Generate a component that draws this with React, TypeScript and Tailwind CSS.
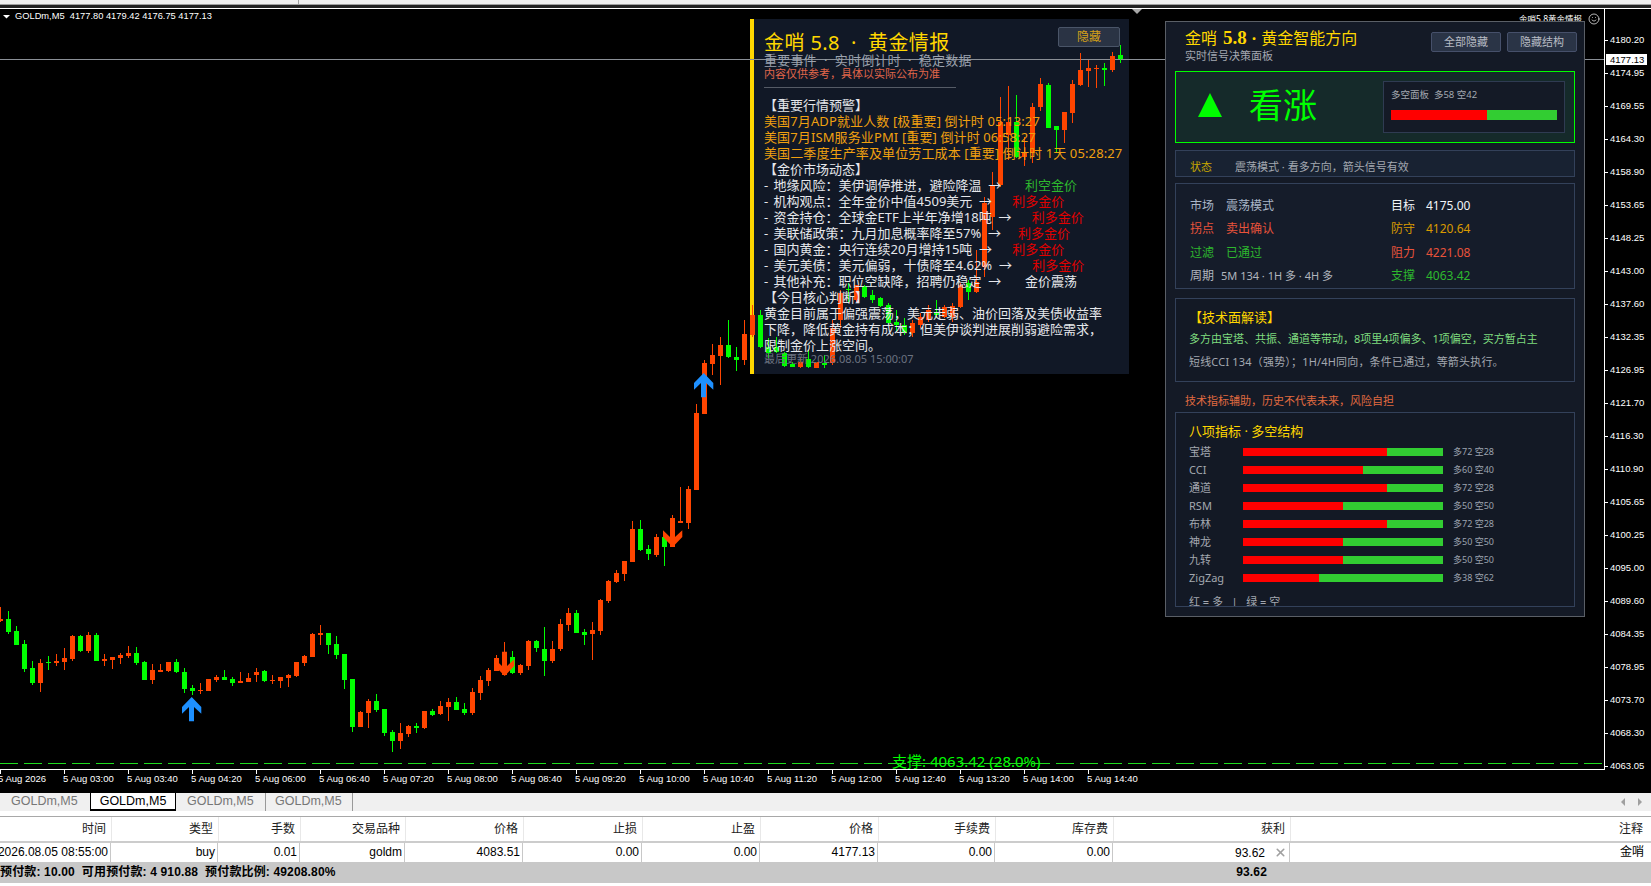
import React from "react";
import { Smile, X } from "lucide-react";

// [orange?, high, bodyTop, bodyBottom, low], read off the reference at 3x
type Candle = [number, number, number, number, number];

const SEGMENTS: { y0: number; rows: Candle[] }[] = [
  {
    y0: 590,
    rows: [
      [1, 50, 87, 93, 96], [0, 63, 87, 126, 131], [0, 108, 123, 165, 165], [0, 150, 162, 237, 246],
      [0, 213, 234, 279, 285], [1, 207, 219, 279, 306], [0, 198, 216, 219, 240], [1, 192, 213, 219, 228],
      [1, 174, 204, 216, 240], [1, 135, 138, 207, 213], [0, 135, 138, 183, 186], [1, 126, 135, 183, 189],
      [0, 129, 135, 213, 213], [1, 192, 207, 213, 228], [1, 201, 201, 210, 237], [1, 189, 195, 204, 222],
      [1, 168, 189, 198, 204], [0, 171, 189, 219, 225], [0, 213, 216, 270, 270], [1, 222, 240, 270, 282],
      [1, 222, 240, 246, 246], [1, 216, 216, 243, 246], [0, 207, 216, 246, 249], [0, 234, 246, 297, 309],
      [0, 285, 294, 303, 315], [1, 279, 300, 303, 312], [1, 267, 267, 303, 303], [1, 255, 261, 270, 276],
      [0, 240, 261, 270, 270], [0, 261, 267, 279, 288], [1, 246, 273, 279, 279], [1, 249, 264, 276, 276],
      [1, 234, 246, 255, 276], [0, 240, 243, 273, 276], [1, 255, 270, 273, 282], [1, 261, 261, 273, 294],
      [1, 252, 255, 264, 291], [1, 216, 216, 258, 261], [1, 195, 198, 219, 228], [1, 129, 132, 201, 201],
      [1, 105, 129, 135, 165], [0, 129, 129, 165, 192], [0, 138, 162, 195, 207], [0, 192, 192, 270, 297],
      [0, 267, 267, 411, 426], [1, 363, 366, 411, 411], [1, 327, 333, 369, 414], [0, 312, 333, 360, 366],
      [0, 357, 357, 429, 438], [0, 420, 426, 453, 486], [1, 399, 429, 453, 477], [1, 405, 408, 432, 441],
      [0, 399, 408, 414, 429], [1, 363, 363, 414, 417], [0, 357, 363, 375, 378], [1, 333, 348, 372, 375],
      [1, 324, 336, 351, 393], [0, 321, 336, 360, 360], [0, 339, 357, 369, 375], [1, 294, 306, 369, 375],
      [1, 258, 270, 309, 330], [1, 234, 240, 273, 288], [1, 195, 204, 243, 243],
    ],
  },
  {
    y0: 560,
    rows: [
      [1, 246, 279, 345, 345], [0, 273, 291, 339, 342], [1, 312, 315, 339, 345], [1, 240, 243, 318, 330],
      [0, 240, 243, 264, 276], [0, 201, 267, 303, 348], [1, 243, 267, 303, 309], [1, 177, 192, 267, 273],
      [1, 144, 159, 195, 213], [0, 150, 159, 219, 219], [0, 207, 216, 225, 255], [1, 186, 210, 222, 300],
      [1, 117, 120, 213, 225], [1, 60, 63, 123, 129], [1, 30, 39, 66, 69],
    ],
  },
  {
    y0: 330,
    rows: [
      [1, 693, 693, 732, 753], [1, 573, 597, 696, 696], [0, 570, 597, 660, 663], [0, 645, 657, 672, 690],
      [1, 612, 621, 675, 681], [0, 612, 621, 651, 708], [1, 555, 564, 651, 651], [1, 471, 573, 579, 579],
      [1, 468, 477, 579, 597], [1, 222, 249, 480, 480], [1, 90, 99, 252, 252], [1, 42, 75, 102, 135],
      [1, 21, 45, 78, 165], [0, -30, 45, 81, 84], [0, 51, 81, 90, 123],
    ],
  },
  {
    y0: 0,
    rows: [
      [1, 960, 1002, 1080, 1095], [1, 915, 945, 1005, 1012], [0, 930, 945, 1040, 1045], [0, 1015, 1040, 1058, 1075],
      [0, 1010, 1040, 1055, 1060], [0, 1055, 1058, 1098, 1100], [0, 1085, 1092, 1100, 1100], [1, 1075, 1085, 1100, 1105],
      [0, 1050, 1078, 1100, 1105], [1, 1085, 1087, 1103, 1103], [0, 1065, 1090, 1095, 1105], [1, 960, 985, 1090, 1095],
      [1, 870, 880, 960, 985], [0, 850, 868, 870, 905], [1, 855, 855, 900, 905], [0, 855, 858, 890, 895],
      [0, 870, 885, 900, 910], [0, 890, 895, 918, 920], [0, 910, 915, 970, 975], [0, 930, 965, 975, 995],
      [0, 955, 975, 1000, 1005], [1, 960, 968, 1000, 1010], [1, 940, 950, 975, 985], [1, 915, 930, 960, 965],
      [0, 900, 935, 945, 955], [1, 915, 920, 950, 955], [1, 910, 918, 950, 965], [1, 850, 855, 920, 925],
      [0, 840, 848, 875, 900], [1, 750, 845, 875, 880], [1, 590, 610, 800, 830], [1, 515, 555, 650, 690],
      [1, 290, 365, 555, 560], [1, 258, 365, 405, 480], [0, 285, 365, 470, 475], [1, 410, 460, 470, 497],
      [1, 310, 320, 460, 490], [1, 235, 252, 320, 332], [0, 250, 255, 383, 385], [0, 378, 378, 390, 460],
      [1, 335, 335, 390, 430], [1, 240, 252, 338, 368], [1, 160, 210, 255, 257], [1, 180, 205, 212, 260],
      [1, 195, 205, 207, 265], [0, 190, 205, 210, 258], [1, 155, 168, 210, 215], [0, 135, 165, 178, 188],
    ],
  },
];

const CANDLES = SEGMENTS.flatMap((seg) =>
  seg.rows.map(([up, hi, top, bot, lo]) => ({
    up: up === 1,
    hi: Math.round(seg.y0 + hi / 3),
    top: Math.round(seg.y0 + top / 3),
    bot: Math.round(seg.y0 + bot / 3),
    lo: Math.round(seg.y0 + lo / 3),
  }))
);

const AXIS = [
  "4180.20", "4174.95", "4169.55", "4164.30", "4158.90", "4153.65", "4148.25", "4143.00",
  "4137.60", "4132.35", "4126.95", "4121.70", "4116.30", "4110.90", "4105.65", "4100.25",
  "4095.00", "4089.60", "4084.35", "4078.95", "4073.70", "4068.30", "4063.05",
];

const TIMES = [
  "5 Aug 2026", "5 Aug 03:00", "5 Aug 03:40", "5 Aug 04:20", "5 Aug 06:00", "5 Aug 06:40",
  "5 Aug 07:20", "5 Aug 08:00", "5 Aug 08:40", "5 Aug 09:20", "5 Aug 10:00", "5 Aug 10:40",
  "5 Aug 11:20", "5 Aug 12:00", "5 Aug 12:40", "5 Aug 13:20", "5 Aug 14:00", "5 Aug 14:40",
];

const NEWS = [
  { text: " 地缘风险：美伊调停推进，避险降温  →       ", tag: "利空金价", cls: "text-[#2eb82e]" },
  { text: " 机构观点：全年金价中值4509美元  →      ", tag: "利多金价", cls: "text-[#e00000]" },
  { text: " 资金持仓：全球金ETF上半年净增18吨  →      ", tag: "利多金价", cls: "text-[#e00000]" },
  { text: " 美联储政策：九月加息概率降至57%  →     ", tag: "利多金价", cls: "text-[#e00000]" },
  { text: " 国内黄金：央行连续20月增持15吨  →      ", tag: "利多金价", cls: "text-[#e00000]" },
  { text: " 美元美债：美元偏弱，十债降至4.62%  →      ", tag: "利多金价", cls: "text-[#e00000]" },
  { text: " 其他补充：职位空缺降，招聘仍稳定  →       ", tag: "金价震荡", cls: "text-[#e5e7eb]" },
];

const INDICATORS = [
  { name: "宝塔", bull: 72, bear: 28 },
  { name: "CCI", bull: 60, bear: 40 },
  { name: "通道", bull: 72, bear: 28 },
  { name: "RSM", bull: 50, bear: 50 },
  { name: "布林", bull: 72, bear: 28 },
  { name: "神龙", bull: 50, bear: 50 },
  { name: "九转", bull: 50, bear: 50 },
  { name: "ZigZag", bull: 38, bear: 62 },
];

const COLS = [
  { w: "w-[112px]", rw: "w-[111px]", head: "时间", val: "2026.08.05 08:55:00" },
  { w: "w-[107px]", rw: "w-[107px]", head: "类型", val: "buy" },
  { w: "w-[82px]", rw: "w-[82px]", head: "手数", val: "0.01" },
  { w: "w-[105px]", rw: "w-[105px]", head: "交易品种", val: "goldm" },
  { w: "w-[118px]", rw: "w-[118px]", head: "价格", val: "4083.51" },
  { w: "w-[119px]", rw: "w-[119px]", head: "止损", val: "0.00" },
  { w: "w-[118px]", rw: "w-[118px]", head: "止盈", val: "0.00" },
  { w: "w-[118px]", rw: "w-[118px]", head: "价格", val: "4177.13" },
  { w: "w-[117px]", rw: "w-[117px]", head: "手续费", val: "0.00" },
  { w: "w-[118px]", rw: "w-[118px]", head: "库存费", val: "0.00" },
];

const Arrow = ({ x, y, color, flip }: { x: number; y: number; color: string; flip?: boolean }) => (
  <polygon
    transform={flip ? `translate(${x} ${y + 24}) scale(1 -1)` : `translate(${x} ${y})`}
    points="9.7,0 19.3,10 19.3,16.7 12,10 12,24.3 7,24.3 7,10 0,16.7 0,10"
    fill={color}
  />
);

const Chart = () => (
  <svg className="absolute left-0 top-0 z-10" width={1604} height={760} viewBox="0 9 1604 760" shapeRendering="crispEdges">
    <line x1={0} x2={1604} y1={59.5} y2={59.5} stroke="#8a8f96" />
    <line x1={0} x2={1604} y1={763.5} y2={763.5} stroke="#1fdc1f" strokeDasharray="18 6" />
    {CANDLES.map((c, i) => (
      <g key={i} fill={c.up ? "#ff4500" : "#00ff00"}>
        <rect x={8 * i} y={c.hi} width={1} height={Math.max(c.lo - c.hi, 1)} />
        <rect x={8 * i - 2} y={c.top} width={5} height={Math.max(c.bot - c.top, 1)} />
      </g>
    ))}
    <g shapeRendering="auto">
      <Arrow x={182} y={697} color="#1e90ff" />
      <Arrow x={694} y={373} color="#1e90ff" />
      <Arrow x={495} y={652} color="#ff4500" flip />
      <Arrow x={663} y={523} color="#ff4500" flip />
      <polygon points="3,15 10,15 6.5,18.5" fill="#ffffff" />
      <polygon points="1132,9 1142,9 1137,14" fill="#a8a8a8" />
    </g>
  </svg>
);

const LeftPanelText = () => (
  <div className="absolute left-[754px] top-[10px] z-20 w-[375px] pl-[10px] pt-[13px] text-[13px] leading-[16px] text-[#e5e7eb]">
    <button className="absolute right-[9px] top-[8px] flex h-[20px] w-[62px] items-center justify-center rounded-[2px] border border-[#4a5568] bg-[#2a3344] text-[12px] text-[#d4a017]">
      隐藏
    </button>
    <div className="text-[20px] leading-[21px] tracking-[0.4px] text-[#ffd700] whitespace-pre">金哨 5.8  ·  黄金情报</div>
    <div className="text-[13px] leading-[14px] tracking-[0.2px] text-[#9ca3af] whitespace-pre">重要事件  ·  实时倒计时  ·  稳定数据</div>
    <div className="text-[11px] leading-[14px] text-[#e0664a]">内容仅供参考，具体以实际公布为准</div>
    <div className="mb-[9px] mt-[6px] h-px w-[192px] bg-[#555b66]" />
    <div>【重要行情预警】</div>
    <div className="tracking-[0.12px] text-[#f0a010] whitespace-pre">美国7月ADP就业人数 [极重要] 倒计时 05:13:27</div>
    <div className="tracking-[0.12px] text-[#f0a010] whitespace-pre">美国7月ISM服务业PMI [重要] 倒计时 06:58:27</div>
    <div className="tracking-[0.12px] text-[#f0a010] whitespace-pre">美国二季度生产率及单位劳工成本 [重要] 倒计时 1天 05:28:27</div>
    <div>【金价市场动态】</div>
    {NEWS.map((n) => (
      <div key={n.text} className="whitespace-pre">
        <span className="mr-[2px]">-</span>
        {n.text}
        <span className={n.cls}>{n.tag}</span>
      </div>
    ))}
    <div>【今日核心判断】</div>
    <div className="whitespace-pre">黄金目前属于偏强震荡，美元走弱、油价回落及美债收益率</div>
    <div className="whitespace-pre">下降，降低黄金持有成本；但美伊谈判进展削弱避险需求，</div>
    <div>限制金价上涨空间。</div>
    <div className="-mt-[2px] text-[11px] text-[#6b7280]">最后更新 2026.08.05 15:00:07</div>
  </div>
);

const InfoCell = ({ label, value, cls, w, small }: { label: string; value: string; cls: string; w: string; small?: boolean }) => (
  <div className={`flex h-[23px] items-center ${cls}`}>
    <span className={`${w} text-[12px]`}>{label}</span>
    <span className={small ? "text-[11px]" : "text-[12px]"}>{value}</span>
  </div>
);

const RightPanel = () => (
  <div className="absolute left-[1165px] top-[12px] z-30 h-[596px] w-[420px] border border-[#5a5f66] bg-[#141a26] px-[9px]">
    <div className="flex h-[49px] justify-between pl-[10px]">
      <div className="pt-[5px]">
        <div className="flex items-baseline text-[16px] leading-[22px] text-[#ffd700]">
          <span>金哨</span>
          <span className="ml-[6px] font-['Liberation_Serif',serif] text-[19px] font-bold">5.8</span>
          <b className="mx-[5px] font-bold">·</b>
          <span>黄金智能方向</span>
        </div>
        <div className="text-[11px] leading-[14px] text-[#a3a8b0]">实时信号决策面板</div>
      </div>
      <div className="-mr-[2px] flex gap-[6px] pt-[10px]">
        <button className="h-[20px] w-[70px] rounded-[2px] border border-[#46506a] bg-[#2a3446] text-[11px] leading-[18px] text-[#b8bcc4]">全部隐藏</button>
        <button className="h-[20px] w-[70px] rounded-[2px] border border-[#46506a] bg-[#2a3446] text-[11px] leading-[18px] text-[#b8bcc4]">隐藏结构</button>
      </div>
    </div>

    <div className="flex h-[72px] items-center border border-[#00ff00] bg-[#152a2a] pl-[22px] pr-[9px]">
      <svg width={24} height={24} viewBox="0 0 24 24" className="mb-[4px] shrink-0">
        <polygon points="12,0 24,24 0,24" fill="#00ff00" />
      </svg>
      <span className="mb-[4px] ml-[27px] text-[34px] leading-[40px] text-[#00ff00]">看涨</span>
      <div className="ml-auto h-[52px] w-[182px] border border-[#2f3b52] bg-[#141a26] px-[7px] pt-[6px]">
        <div className="text-[9.5px] leading-[14px] text-[#a3a8b0] whitespace-pre">多空面板  多58 空42</div>
        <div className="mt-[8px] flex h-[10px] w-[166px]">
          <div className="w-[58%] bg-[#ff0000]" />
          <div className="flex-1 bg-[#32cd32]" />
        </div>
      </div>
    </div>

    <div className="mt-[7px] flex h-[27px] items-center border border-[#33415a] bg-[#182232] pl-[14px] pt-[8px] text-[11px]">
      <span className="w-[45px] text-[#c8a800]">状态</span>
      <span className="text-[#a3a8b0]">震荡模式 · 看多方向，箭头信号有效</span>
    </div>

    <div className="mt-[6px] grid h-[106px] grid-cols-[201px_1fr] border border-[#33415a] bg-[#151c2a] pl-[14px] pt-[10px]">
      <InfoCell label="市场" value="震荡模式" cls="text-[#a9b6c8]" w="w-[36px]" />
      <InfoCell label="目标" value="4175.00" cls="text-[#f1f5f9]" w="w-[35px]" />
      <InfoCell label="拐点" value="卖出确认" cls="text-[#e8533a]" w="w-[36px]" />
      <InfoCell label="防守" value="4120.64" cls="text-[#d99a00]" w="w-[35px]" />
      <InfoCell label="过滤" value="已通过" cls="text-[#2eb82e]" w="w-[36px]" />
      <InfoCell label="阻力" value="4221.08" cls="text-[#e8533a]" w="w-[35px]" />
      <InfoCell label="周期" value="5M 134 · 1H 多 · 4H 多" cls="text-[#b0b5bd]" w="w-[31px]" small />
      <InfoCell label="支撑" value="4063.42" cls="text-[#2eb82e]" w="w-[35px]" />
    </div>

    <div className="mt-[9px] h-[84px] border border-[#33415a] bg-[#131925] pl-[13px] pt-[9px] text-[11px] leading-[23px]">
      <div className="mb-px text-[13px] leading-[18px] text-[#ffd700]">【技术面解读】</div>
      <div className="text-[#7fdc7f] whitespace-pre">多方由宝塔、共振、通道等带动，8项里4项偏多、1项偏空，买方暂占主</div>
      <div className="tracking-[0.18px] text-[#a3a8b0] whitespace-pre">短线CCI 134（强势）；1H/4H同向，条件已通过，等箭头执行。</div>
    </div>

    <div className="mb-[3px] mt-[11px] pl-[10px] text-[11px] leading-[16px] text-[#e06a40]">技术指标辅助，历史不代表未来，风险自担</div>

    <div className="h-[195px] overflow-hidden border border-[#33415a] bg-[#131925] pl-[13px] pt-[9px]">
      <div className="mb-[3px] text-[13px] leading-[18px] text-[#ffd700]">八项指标 · 多空结构</div>
      {INDICATORS.map((row) => (
        <div key={row.name} className="flex h-[18px] items-center text-[11px] text-[#a3a8b0]">
          <span className="w-[54px]">{row.name}</span>
          <div className="flex h-[8px] w-[200px]">
            <div className="bg-[#ff0000]" style={{ width: `${row.bull}%` }} />
            <div className="flex-1 bg-[#32cd32]" />
          </div>
          <span className="ml-[10px] text-[9px] text-[#9ca3af]">{`多${row.bull} 空${row.bear}`}</span>
        </div>
      ))}
      <div className="mt-[7px] text-[11px] leading-[16px] text-[#a3a8b0] whitespace-pre">红 = 多   |   绿 = 空</div>
    </div>
  </div>
);

const PriceAxis = () => (
  <div className="relative w-[46px] shrink-0 pt-[15px] font-['Liberation_Sans',sans-serif] text-[9.5px] text-white">
    {AXIS.map((p) => (
      <div key={p} className="flex h-[33px] items-center">
        <div className="h-px w-[3px] bg-white" />
        <span className="ml-[2px]">{p}</span>
      </div>
    ))}
    <div className="absolute left-px top-[45px] h-[11px] w-[41px] bg-white pl-[4px] text-[9.5px] leading-[11px] text-black">4177.13</div>
  </div>
);

export default function App() {
  return (
    <div className="flex h-[886px] w-[1651px] flex-col overflow-hidden bg-white font-['Noto_Sans','Noto_Sans_CJK_SC',sans-serif]">
      {/* terminal toolbar edge */}
      <div className="h-[4px] bg-[#f0f0f0]">
        <div className="ml-[298px] h-full w-px bg-[#a0a0a0]" />
      </div>
      <div className="h-px bg-[#a0a0a0]" />
      <div className="h-[3px] bg-[#222222]" />

      <div className="flex h-[762px] border-t border-white bg-black">
        <div className="relative w-[1605px] shrink-0 border-b border-r border-white">
          <div className="absolute left-[750px] top-[10px] h-[355px] w-[379px] border-l-4 border-[#ffd700] bg-[#111826]" />
          <Chart />
          <LeftPanelText />
          <div className="absolute left-[15px] top-[2px] z-20 font-['Liberation_Sans',sans-serif] text-[9.3px] leading-[11px] text-white whitespace-pre">
            GOLDm,M5  4177.80 4179.42 4176.75 4177.13
          </div>
          <div className="absolute left-[1519px] top-[4px] z-20 flex items-center gap-px text-[8.5px] leading-[10px] text-white">
            <span className="w-[68px] whitespace-nowrap">金哨5.8黄金情报</span>
            <Smile size={12} strokeWidth={1.4} />
          </div>
          <div className="absolute left-[892px] top-[742px] z-[5] text-[15px] leading-[20px] text-[#00ff00] whitespace-pre">支撑: 4063.42 (28.0%)</div>
          <RightPanel />
        </div>
        <PriceAxis />
      </div>

      {/* time axis */}
      <div className="flex h-[22px] shrink-0 bg-black font-['Liberation_Sans',sans-serif] text-[9.5px] text-white">
        {TIMES.map((t, i) => (
          <div key={t} className="w-[64px] shrink-0">
            <div className="h-[4px] w-px bg-white" />
            <div className={i === 0 ? "-ml-[2px] leading-[10px] whitespace-nowrap" : "-ml-px leading-[10px] whitespace-nowrap"}>{t}</div>
          </div>
        ))}
      </div>

      <div className="font-['Liberation_Sans','Noto_Sans_CJK_SC',sans-serif] text-[12px] text-[#222222]">
        {/* chart tabs */}
        <div className="flex h-[19px] items-stretch border-t border-black bg-[#f0f0f0] text-[12.5px] leading-[17px] text-[#777777]">
          <div className="w-[90px] pl-[11px]">GOLDm,M5</div>
          <div className="w-[86px] border-x border-b-2 border-black bg-white text-center text-black">GOLDm,M5</div>
          <div className="w-[90px] border-r border-[#999999] pl-[11px]">GOLDm,M5</div>
          <div className="w-[87px] border-r border-[#999999] pl-[9px]">GOLDm,M5</div>
          <div className="ml-auto flex items-center gap-[11px] pr-[8px]">
            <svg width={6} height={8} viewBox="0 0 6 8"><polygon points="5,0 5,8 1,4" fill="#a0a0a0" /></svg>
            <svg width={6} height={8} viewBox="0 0 6 8"><polygon points="1,0 1,8 5,4" fill="#a0a0a0" /></svg>
          </div>
        </div>
        <div className="h-[5px] bg-white" />
        <div className="h-px bg-[#a8a8a8]" />

        {/* trade table */}
        <div className="flex h-[24px] items-center bg-white">
          {COLS.map((c, i) => (
            <div key={i} className={`${c.w} h-full shrink-0 border-r border-[#e8e8e8] pr-[5px] text-right leading-[24px]`}>{c.head}</div>
          ))}
          <div className="h-full w-[177px] shrink-0 border-r border-[#e8e8e8] pr-[5px] text-right leading-[24px]">获利</div>
          <div className="h-full flex-1 pr-[8px] text-right leading-[24px]">注释</div>
        </div>
        <div className="h-[2px] bg-[#cccccc]" />
        <div className="flex h-[19px] items-center bg-white text-black">
          {COLS.map((c, i) => (
            <div key={i} className={`${c.rw} h-full shrink-0 overflow-hidden border-r border-[#c8c8c8] pr-[2px] text-right leading-[19px] whitespace-nowrap ${i === 0 ? "flex justify-end" : ""}`}>{c.val}</div>
          ))}
          <div className="flex h-full w-[177px] shrink-0 items-center justify-end gap-[9px] border-r border-[#c8c8c8] pr-[2px]">
            <span>93.62</span>
            <X size={13} strokeWidth={3} className="text-[#a0a0a0]" />
          </div>
          <div className="h-full flex-1 pr-[7px] text-right leading-[19px]">金哨</div>
        </div>
        <div className="flex h-[21px] items-center bg-[#c8c8c8] font-bold text-black">
          <div className="flex w-[1267px] justify-between leading-[21px] tracking-[0.15px] whitespace-pre">
            <span>预付款: 10.00  可用预付款: 4 910.88  预付款比例: 49208.80%</span>
            <span>93.62</span>
          </div>
        </div>
      </div>
    </div>
  );
}
